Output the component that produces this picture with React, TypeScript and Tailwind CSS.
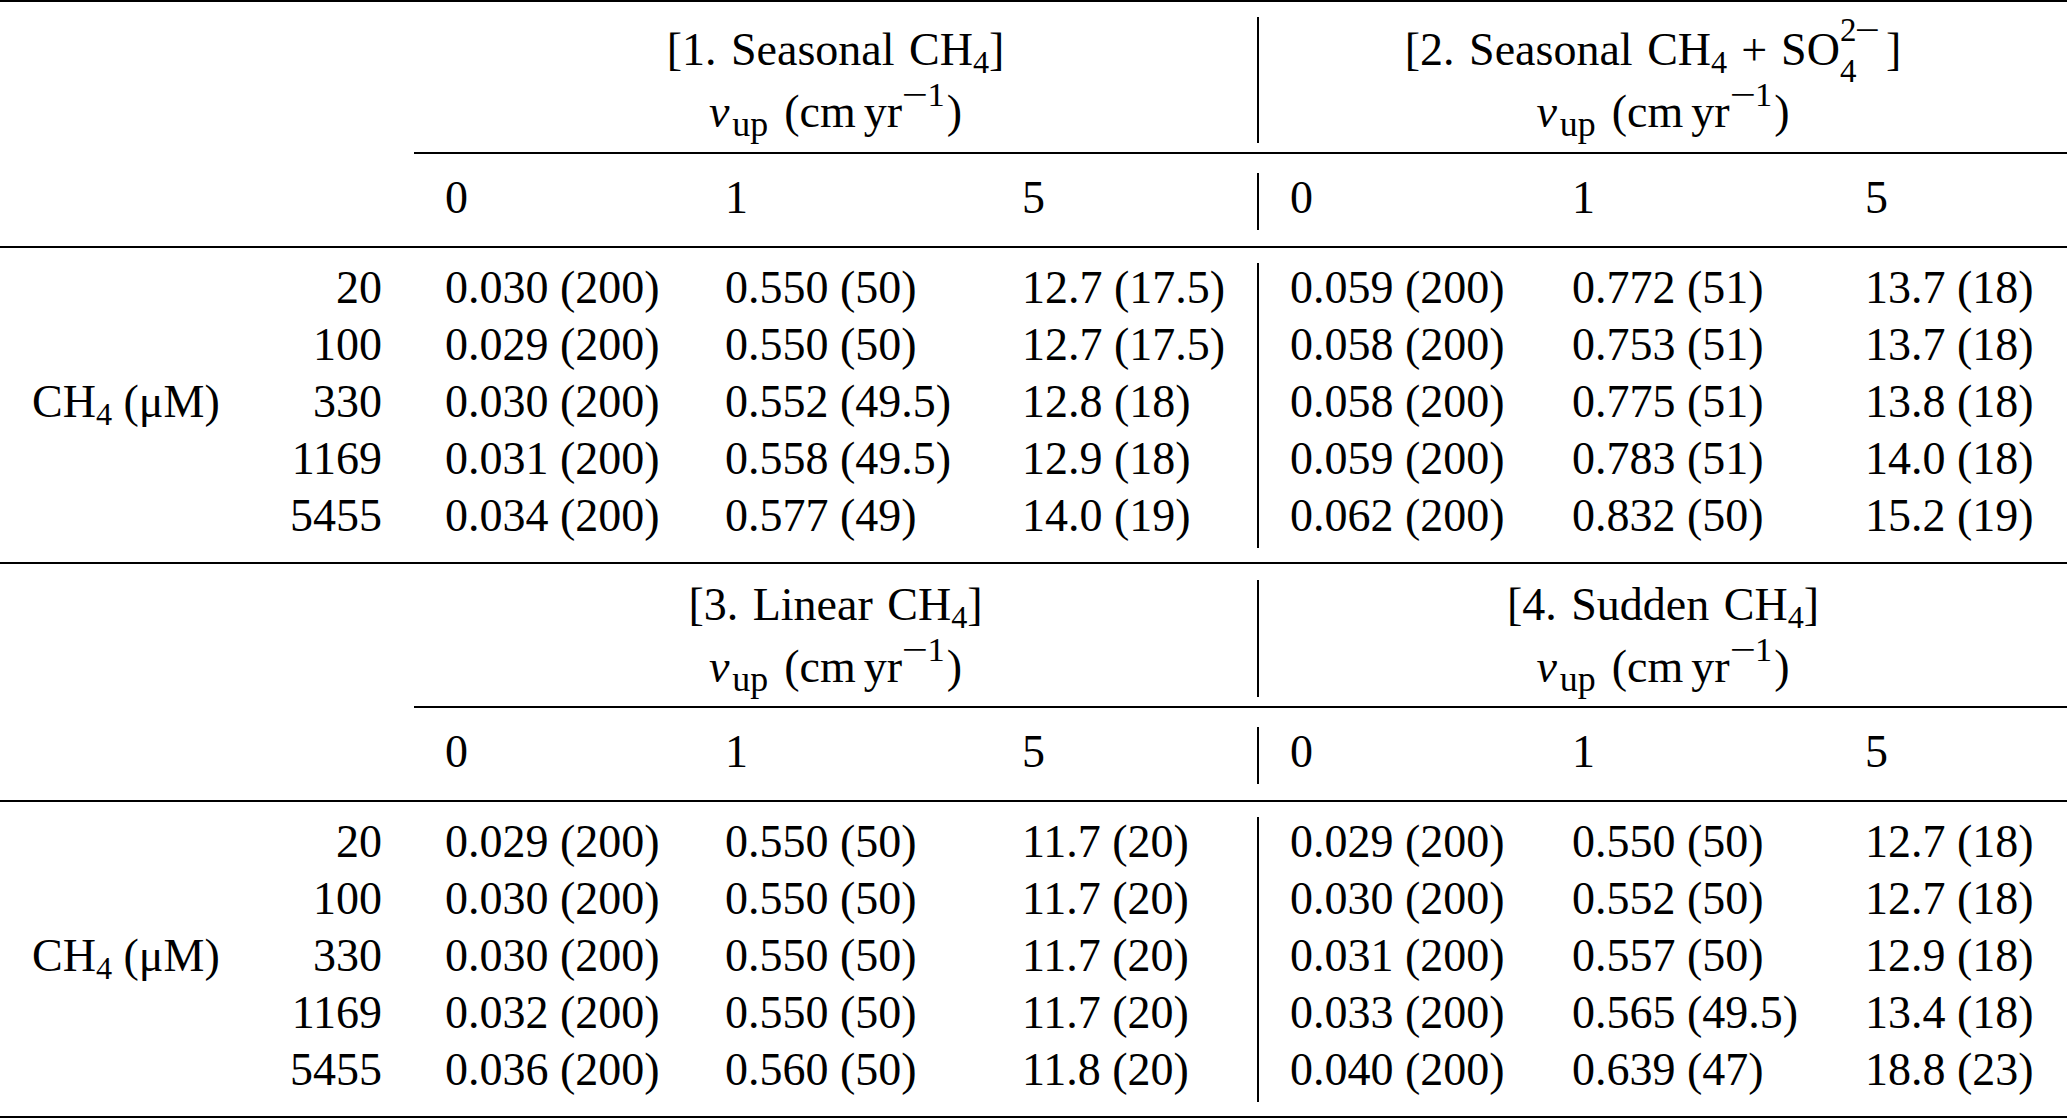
import React from 'react';

type Cells = string[];

const sectionOne: Cells[] = [
  ['20', '0.030 (200)', '0.550 (50)', '12.7 (17.5)', '0.059 (200)', '0.772 (51)', '13.7 (18)'],
  ['100', '0.029 (200)', '0.550 (50)', '12.7 (17.5)', '0.058 (200)', '0.753 (51)', '13.7 (18)'],
  ['330', '0.030 (200)', '0.552 (49.5)', '12.8 (18)', '0.058 (200)', '0.775 (51)', '13.8 (18)'],
  ['1169', '0.031 (200)', '0.558 (49.5)', '12.9 (18)', '0.059 (200)', '0.783 (51)', '14.0 (18)'],
  ['5455', '0.034 (200)', '0.577 (49)', '14.0 (19)', '0.062 (200)', '0.832 (50)', '15.2 (19)'],
];

const sectionTwo: Cells[] = [
  ['20', '0.029 (200)', '0.550 (50)', '11.7 (20)', '0.029 (200)', '0.550 (50)', '12.7 (18)'],
  ['100', '0.030 (200)', '0.550 (50)', '11.7 (20)', '0.030 (200)', '0.552 (50)', '12.7 (18)'],
  ['330', '0.030 (200)', '0.550 (50)', '11.7 (20)', '0.031 (200)', '0.557 (50)', '12.9 (18)'],
  ['1169', '0.032 (200)', '0.550 (50)', '11.7 (20)', '0.033 (200)', '0.565 (49.5)', '13.4 (18)'],
  ['5455', '0.036 (200)', '0.560 (50)', '11.8 (20)', '0.040 (200)', '0.639 (47)', '18.8 (23)'],
];

const Sub: React.FC<{ children: React.ReactNode }> = ({ children }) => (
  <sub className="text-[0.7em]">{children}</sub>
);

const CH4 = () => (
  <>
    CH<Sub>4</Sub>
  </>
);

const Velocity = () => (
  <>
    <i>v</i>
    <sub className="ml-[3px] text-[0.78em]">up</sub>
    <span className="inline-block w-[16px]" />
    (cm<span className="inline-block w-[8px]" />yr
    <sup className="text-[0.75em] -top-[0.6em]">
      <span className="mx-[3px] inline-block scale-x-[1.35]">−</span>1
    </sup>
    <span className="inline-block w-[2px]" />)
  </>
);

// SO4 with stacked 2− / 4 scripts
const Sulfate = () => (
  <>
    SO
    <span className="relative inline-block w-[46px]">
      <span className="absolute left-0 top-[-51px] text-[33px] leading-none whitespace-nowrap">
        2<span className="ml-[2px] inline-block scale-x-[1.35]">−</span>
      </span>
      <span className="absolute left-0 top-[-10px] text-[33px] leading-none">4</span>
    </span>
  </>
);

const Row: React.FC<{ cells: Cells; label?: React.ReactNode }> = ({ cells, label }) => (
  <div className="flex h-[57px] leading-[49px] whitespace-nowrap">
    <div className="flex w-[382px] justify-between pl-[32px]">
      <span>{label}</span>
      <span>{cells[0]}</span>
    </div>
    <div className="w-[343px] pl-[63px]">{cells[1]}</div>
    <div className="w-[297px]">{cells[2]}</div>
    <div className="w-[235px]">{cells[3]}</div>
    <div className="flex flex-1 border-l-2 border-black">
      <div className="w-[313px] pl-[31px]">{cells[4]}</div>
      <div className="w-[293px]">{cells[5]}</div>
      <div className="flex-1">{cells[6]}</div>
    </div>
  </div>
);

interface SectionProps {
  left: React.ReactNode;
  right: React.ReactNode;
  rows: Cells[];
  first?: boolean;
}

const Section: React.FC<SectionProps> = ({ left, right, rows, first }) => (
  <div>
    {/* group headers */}
    <div className={`flex whitespace-nowrap [word-spacing:3px] ${first ? 'mt-[15px] h-[126px]' : 'mt-[16px] h-[117px]'}`}>
      <div className={`w-[1257px] pl-[414px] text-center ${first ? 'pt-[8px]' : ''}`}>
        <div className="h-[62px] leading-[49px]">{left}</div>
        <div className="h-[57px] leading-[49px]">
          <Velocity />
        </div>
      </div>
      <div className={`flex-1 border-l-2 border-black text-center ${first ? 'pt-[8px]' : ''}`}>
        <div className="h-[62px] leading-[49px]">{right}</div>
        <div className="h-[57px] leading-[49px]">
          <Velocity />
        </div>
      </div>
    </div>
    <div className="ml-[414px] mt-[9px] h-[1.5px] bg-black" />

    {/* velocity values */}
    <div className="mt-[19.5px]">
      <Row cells={['', '0', '1', '5', '0', '1', '5']} />
    </div>
    <div className="mt-[16px] h-[2px] bg-black" />

    {/* data */}
    <div className="mt-[15px]">
      {rows.map((r, i) => (
        <Row
          key={i}
          cells={r}
          label={
            i === 2 ? (
              <>
                <CH4 /> (μM)
              </>
            ) : undefined
          }
        />
      ))}
    </div>
    <div className="mt-[14px] h-[2px] bg-black" />
  </div>
);

export default function App() {
  return (
    <div className="w-[2067px] h-[1120px] bg-white text-black text-[46px] font-['Liberation_Serif',serif] overflow-hidden">
      <div className="h-[2px] bg-black" />
      <Section
        first
        rows={sectionOne}
        left={
          <>
            [1. Seasonal <CH4 />]
          </>
        }
        right={
          <span className="pr-[20px]">
            [2. Seasonal <CH4 />
            <span className="mx-[14px]">+</span>
            <Sulfate />]
          </span>
        }
      />
      <Section
        rows={sectionTwo}
        left={
          <>
            [3. Linear <CH4 />]
          </>
        }
        right={
          <>
            [4. Sudden <CH4 />]
          </>
        }
      />
    </div>
  );
}
